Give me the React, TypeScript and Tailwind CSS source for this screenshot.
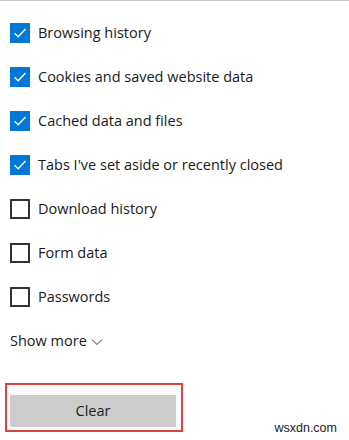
import { useState } from 'react'

const ITEMS = [
  { label: 'Browsing history', checked: true },
  { label: 'Cookies and saved website data', checked: true },
  { label: 'Cached data and files', checked: true },
  { label: "Tabs I've set aside or recently closed", checked: true },
  { label: 'Download history', checked: false },
  { label: 'Form data', checked: false },
  { label: 'Passwords', checked: false },
]

function Box({ checked }: { checked: boolean }) {
  if (checked) {
    return (
      <span className="w-5 h-5 bg-[#0078d7] flex items-center justify-center shrink-0">
        <svg width="14" height="14" viewBox="0 0 14 14" fill="none">
          <path d="M1.5 7.2 L5.2 10.8 L12.5 3" stroke="white" strokeWidth="1.3" />
        </svg>
      </span>
    )
  }
  return <span className="w-5 h-5 border-2 border-[#333333] bg-white shrink-0" />
}

export default function App() {
  const [items, setItems] = useState(ITEMS)

  return (
    <div
      className="relative w-[349px] h-[440px] bg-white border-t border-[#c8c8c8] text-[#1a1a1a] overflow-hidden"
      style={{ fontFamily: '"Segoe UI", "Open Sans", sans-serif' }}
    >
      <div className="pt-[10px]">
        {items.map((it, i) => (
          <button
            key={it.label}
            onClick={() => setItems(items.map((x, j) => (j === i ? { ...x, checked: !x.checked } : x)))}
            className="flex items-center h-11 pl-[10px] gap-2 text-[14.5px] text-left w-full"
          >
            <Box checked={it.checked} />
            <span>{it.label}</span>
          </button>
        ))}
        <div className="flex items-center h-11 pl-[10px] text-[14.5px] gap-1">
          <span>Show more</span>
          <svg width="12" height="8" viewBox="0 0 12 8" fill="none" className="mt-0.5">
            <path d="M1 1.5 L6 6.5 L11 1.5" stroke="#333" strokeWidth="1" />
          </svg>
        </div>
      </div>

      <div className="relative mt-[32px] ml-[10px] w-[166px]">
        <button className="w-full h-8 bg-[#cccccc] text-[14.5px]">Clear</button>
        {/* annotation box */}
        <div className="absolute -left-[5px] -top-[12px] w-[178px] h-[49px] border-2 border-[#d94442] pointer-events-none" />
      </div>

      <div
        className="absolute right-[12px] bottom-[6px] text-[12.5px] leading-none text-[#222]"
        style={{ fontFamily: '"Liberation Sans", Arial, sans-serif' }}
      >
        wsxdn.com
      </div>
    </div>
  )
}
